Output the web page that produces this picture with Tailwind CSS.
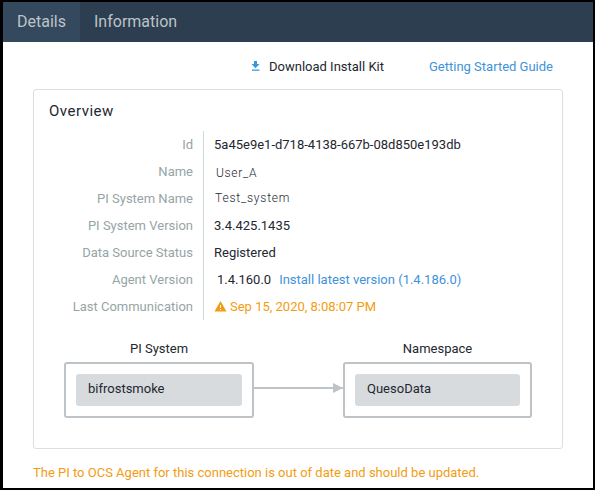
<!DOCTYPE html>
<html lang="en">
<head>
<meta charset="utf-8">
<title>Details</title>
<script src="https://cdn.jsdelivr.net/npm/@tailwindcss/browser@4"></script>
</head>
<body class="w-[595px] h-[490px] overflow-hidden bg-white font-['Roboto',sans-serif] text-[13px] leading-[27px] text-[#23272f] whitespace-nowrap">
<div class="w-[595px] h-[490px] border-black border-t-2 border-r-2 border-b-2 border-l-3 flex flex-col">
  <nav class="h-10 shrink-0 flex bg-[#2c3e50] text-[#bdc3c7] text-[16px] leading-10">
    <a class="w-[77px] pl-[14px] bg-[#34495e]">Details</a>
    <a class="pl-[14px]">Information</a>
  </nav>
  <div class="h-[47px] shrink-0 flex items-center pl-[248px] pt-[2px]">
    <svg class="w-[9px] h-[10px] mb-px shrink-0" viewBox="0 0 9 10" fill="#3498db"><path d="M3 0h3v3h2.5L4.5 7.2.5 3H3zM1 8.5h7.5v1.2H1z"/></svg>
    <span class="ml-[9px] w-[160px]">Download Install Kit</span>
    <a class="text-[#4192d9]">Getting Started Guide</a>
  </div>
  <main class="ml-[30px] w-[530px] h-[360px] shrink-0 border border-[#dcdedf] rounded-[3px]">
    <h1 class="h-[41px] pl-[15px] pt-[8px] text-[15px] leading-[27px] tracking-[0.5px]">Overview</h1>
    <div class="flex">
      <div class="w-[170px] pr-[10px] border-r border-[#d5d8da] text-right text-[#95a5a6] grid grid-cols-1">
        <span>Id</span><span>Name</span><span>PI System Name</span><span>PI System Version</span><span>Data Source Status</span><span>Agent Version</span><span>Last Communication</span>
      </div>
      <div class="pl-[10px] flex flex-col">
        <span>5a45e9e1-d718-4138-667b-08d850e193db</span>
        <span class="h-[27px] pl-[2px] leading-[30px] text-[12px] font-light tracking-[0.7px]">User_A</span>
        <span class="h-[27px] pl-px text-[12px] leading-[26px] font-light tracking-[0.8px]">Test_system</span>
        <span>3.4.425.1435</span>
        <span>Registered</span>
        <span class="pl-[3px]">1.4.160.0<a class="ml-[8px] text-[#4192d9]">Install latest version (1.4.186.0)</a></span>
        <span class="flex items-center text-[#f39c12]"><svg class="w-[13px] h-[11px] mr-[3px]" viewBox="0 0 13 11"><path d="M6.5 0l6 10.5h-12z" fill="#f39c12"/><path d="M6 4h1v3H6zM6 8h1v1H6z" fill="#fff"/></svg>Sep 15, 2020, 8:08:07 PM</span>
      </div>
    </div>
    <div class="flex items-end mt-[15px] pl-[30px]">
      <section class="w-[190px]">
        <h2 class="text-center">PI System</h2>
        <div class="h-14 border-2 border-[#bdc3c7] rounded-[3px] p-[10px]"><div class="h-8 pl-3 leading-[29px] bg-[#d7dbde] rounded-[3px]">bifrostsmoke</div></div>
      </section>
      <svg class="w-[89px] h-[10px] mb-[25px]" viewBox="0 0 89 10" fill="#bdc3c7"><path d="M0 4h89v2H0zM79 0l10 5-10 5z"/></svg>
      <section class="w-[189px]">
        <h2 class="text-center">Namespace</h2>
        <div class="h-14 border-2 border-[#bdc3c7] rounded-[3px] p-[10px]"><div class="h-8 pl-3 leading-[29px] bg-[#d7dbde] rounded-[3px]">QuesoData</div></div>
      </section>
    </div>
  </main>
  <p class="pl-[30px] pt-[10px] text-[#f39c12]">The PI to OCS Agent for this connection is out of date and should be updated.</p>
</div>
</body>
</html>
